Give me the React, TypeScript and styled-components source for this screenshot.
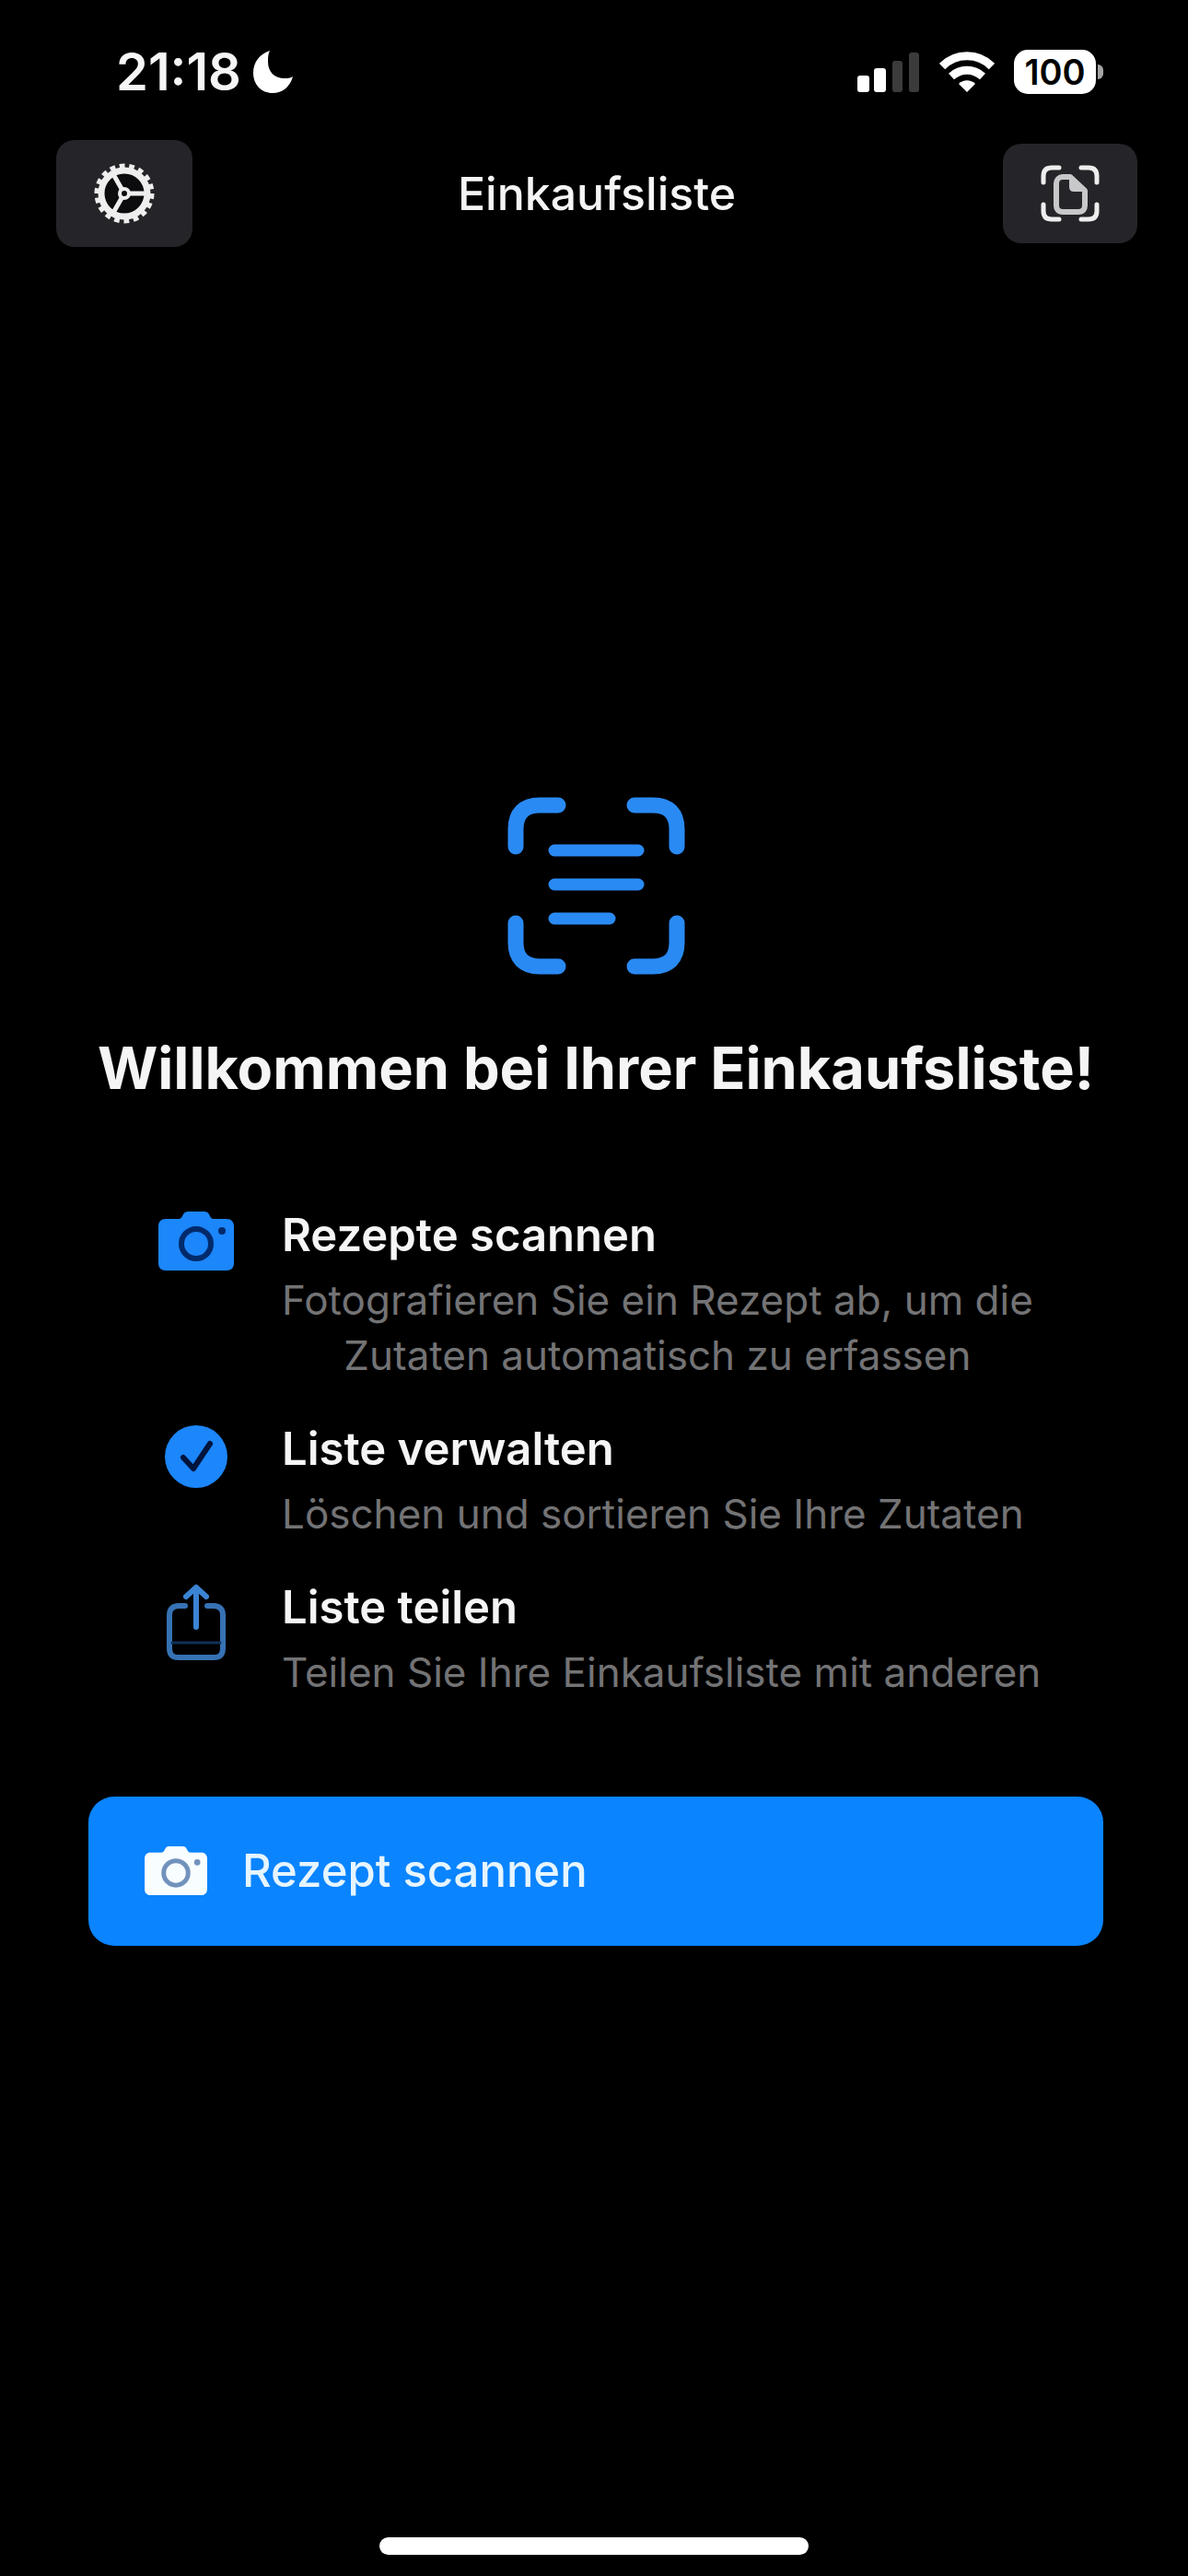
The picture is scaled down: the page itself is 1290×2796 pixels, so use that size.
import React from "react";
import styled, { createGlobalStyle } from "styled-components";

const BLUE = "#0a84ff";

const GlobalStyle = createGlobalStyle`
  *, *::before, *::after { box-sizing: border-box; }
  body {
    margin: 0;
    background: #000;
    color: #f5f5f5;
    font-family: Inter, "Liberation Sans", sans-serif;
  }
  h1, h2, h3, p, ul { margin: 0; padding: 0; }
  svg { display: block; flex: none; }
`;

const Screen = styled.div`
  min-height: 100vh;
  display: flex;
  flex-direction: column;
`;

const StatusBar = styled.div`
  display: flex;
  align-items: center;
  justify-content: space-between;
  padding: 48px 92px 40px 126px;
`;

const StatusGroup = styled.div<{ $gap: number }>`
  display: flex;
  align-items: center;
  gap: ${(p) => p.$gap}px;
  height: 60px;
`;

const Clock = styled.span`
  font-size: 56px;
  font-weight: 600;
  line-height: 60px;
`;

const Battery = styled.div`
  display: flex;
  align-items: center;
  gap: 2px;
`;

const BatteryBody = styled.span`
  width: 89px;
  height: 48px;
  border-radius: 15px;
  background: #fff;
  color: #000;
  font-size: 38px;
  font-weight: 600;
  line-height: 48px;
  text-align: center;
`;

const BatteryTip = styled.span`
  width: 6px;
  height: 16px;
  border-radius: 0 8px 8px 0;
  background: #a5a5a5;
`;

const NavBar = styled.header`
  display: grid;
  grid-template-columns: 1fr auto 1fr;
  align-items: center;
  height: 124px;
  padding: 0 55px 0 61px;
`;

const NavTitle = styled.h1`
  font-size: 50px;
  font-weight: 500;
  line-height: 60px;
`;

const NavButton = styled.button<{ $width: number; $height: number; $end?: boolean }>`
  display: flex;
  align-items: center;
  justify-content: center;
  justify-self: ${(p) => (p.$end ? "end" : "start")};
  width: ${(p) => p.$width}px;
  height: ${(p) => p.$height}px;
  padding: 0;
  border: 0;
  border-radius: 20px;
  background: #252529;
  color: #eee;
`;

const Main = styled.main`
  flex: 1;
  display: flex;
  flex-direction: column;
  justify-content: center;
  padding: 0 92px 0 96px;
`;

const Hero = styled.div`
  display: flex;
  flex-direction: column;
  align-items: center;
  gap: 61px;
`;

const Heading = styled.h2`
  font-size: 63px;
  font-weight: 700;
  line-height: 80px;
  text-align: center;
`;

const FeatureList = styled.ul`
  display: flex;
  flex-direction: column;
  gap: 40px;
  margin: 110px 72px 105px 76px;
  list-style: none;
`;

const Feature = styled.li`
  display: grid;
  grid-template-columns: 82px 1fr;
  column-gap: 52px;
`;

const FeatureIcon = styled.div`
  display: flex;
  justify-content: center;
  align-items: flex-start;
  padding-top: 6px;
`;

const FeatureText = styled.div`
  display: flex;
  flex-direction: column;
  align-items: flex-start;
  gap: 8px;
`;

const FeatureTitle = styled.h3`
  font-size: 49px;
  font-weight: 600;
  line-height: 64px;
`;

const FeatureDetail = styled.p`
  color: #737375;
  font-size: 44px;
  font-weight: 400;
  line-height: 60px;
  text-align: center;
  white-space: pre;
`;

const PrimaryButton = styled.button`
  display: flex;
  align-items: center;
  gap: 38px;
  width: 100%;
  height: 162px;
  padding: 0 61px;
  border: 0;
  border-radius: 28px;
  background: ${BLUE};
  color: #e6f5ff;
  font-family: inherit;
  font-size: 49px;
  font-weight: 500;
  line-height: 60px;
`;

const Footer = styled.footer`
  display: flex;
  justify-content: center;
  padding: 50px 0 23px;
`;

const HomeIndicator = styled.span`
  width: 466px;
  height: 19px;
  border-radius: 10px;
  background: #fff;
`;

const MoonIcon = () => (
  <svg width="46" height="48" viewBox="0 0 46 48" aria-hidden="true">
    <path d="M19 1C7 5 1 14 1 25c0 13 9 22 21 22 11 0 19-7 22-18-3 2-6 2-9 2-11 0-18-7-18-18 0-5 0-8 2-12z" fill="#fff" />
  </svg>
);

const SignalIcon = () => (
  <svg width="68" height="44" viewBox="0 0 68 44" aria-hidden="true">
    <rect x="0" y="26" width="13" height="18" rx="3" fill="#fff" />
    <rect x="18" y="18" width="13" height="26" rx="3" fill="#fff" />
    <rect x="38" y="10" width="11" height="34" rx="3" fill="#3b3b3b" />
    <rect x="56" y="1" width="11" height="43" rx="3" fill="#3b3b3b" />
  </svg>
);

const WifiIcon = () => (
  <svg width="60" height="46" viewBox="0 0 60 46" aria-hidden="true">
    <g fill="none" stroke="#fff" strokeWidth="9">
      <path d="M3 17C18 2 42 2 57 17" />
      <path d="M13 28c10-9 24-9 34 0" />
    </g>
    <path d="M30 45l-9-9c5-5 13-5 18 0z" fill="#fff" />
  </svg>
);

const GearIcon = () => (
  <svg width="66" height="66" viewBox="0 0 66 66" fill="none" stroke="currentColor" aria-hidden="true">
    <circle cx="33" cy="33" r="25" fill="#0c0c0e" strokeWidth="7" />
    <circle cx="33" cy="33" r="30" strokeWidth="5" pathLength="72" strokeDasharray="2.2 1.8" />
    <circle cx="33" cy="33" r="5" strokeWidth="4" />
    <path d="M38 33h18M30.500 28.700l-9-15.600M30.500 37.300l-9 15.600" strokeWidth="5" />
  </svg>
);

const DocumentScanIcon = () => (
  <svg width="64" height="62" viewBox="0 0 64 62" fill="none" stroke="currentColor" strokeLinecap="round" strokeLinejoin="round" aria-hidden="true">
    <path d="M3 19v-7c0-6 3-9 9-9h8M44 3h8c6 0 9 3 9 9v7M61 43v7c0 6-3 9-9 9h-8M20 59h-8c-6 0-9-3-9-9v-7" strokeWidth="5" />
    <path d="M24 13h8l16 15v16c0 4-2 7-7 7H24c-5 0-7-3-7-7V20c0-4 3-7 7-7z" stroke="#c8c8ca" strokeWidth="6" />
    <path d="M32 14v10c0 3 1 4 4 4h11z" fill="#c8c8ca" stroke="#c8c8ca" strokeWidth="2" />
  </svg>
);

const TextScanIcon = () => (
  <svg width="193" height="193" viewBox="0 0 193 193" fill="none" stroke="#2a8af3" strokeLinecap="round" aria-hidden="true">
    <path d="M9 54V35C9 18 18 9 35 9h20M138 9h20c17 0 26 9 26 26v19M184 137v21c0 17-9 26-26 26h-20M55 184H35c-17 0-26-9-26-26v-21" strokeWidth="17" />
    <path d="M51 58h91M51 95h91M51 132h60" strokeWidth="13" />
  </svg>
);

const CameraIcon = ({ width, color, cut }: { width: number; color: string; cut: string }) => (
  <svg width={width} height={Math.round((width * 64) / 82)} viewBox="0 0 82 64" aria-hidden="true">
    <path d="M8 8h14c2 0 3-1 4-3l1-2c1-2 3-3 5-3h18c2 0 4 1 5 3l1 2c1 2 2 3 4 3h14c5 0 8 3 8 8v40c0 5-3 8-8 8H8c-5 0-8-3-8-8V16c0-5 3-8 8-8z" fill={color} />
    <circle cx="41" cy="35" r="16" fill="none" stroke={cut} strokeWidth="6" />
    <circle cx="69" cy="21" r="4" fill={cut} />
  </svg>
);

const CheckIcon = () => (
  <svg width="68" height="68" viewBox="0 0 68 68" aria-hidden="true">
    <circle cx="34" cy="34" r="34" fill="#1c86fb" />
    <path d="M20 35l11 12 18-27" fill="none" stroke="#00143c" strokeWidth="6" strokeLinecap="round" strokeLinejoin="round" />
  </svg>
);

const ShareIcon = () => (
  <svg width="64" height="84" viewBox="0 0 64 84" fill="none" strokeLinecap="round" strokeLinejoin="round" aria-hidden="true">
    <path d="M20 24h-7c-7 0-10 4-10 10v36c0 7 3 10 10 10h38c7 0 10-3 10-10V34c0-6-3-10-10-10h-7" stroke="#3672b4" strokeWidth="6" />
    <path d="M6 64h52" stroke="#12305a" strokeWidth="3" />
    <path d="M32 47V5M21 14L32 4l11 10" stroke="#3b84d4" strokeWidth="6" />
  </svg>
);

const features = [
  {
    icon: <CameraIcon width={82} color="#1c86fb" cut="#002a6b" />,
    title: "Rezepte scannen",
    detail: "Fotografieren Sie ein Rezept ab, um die\nZutaten automatisch zu erfassen",
  },
  { icon: <CheckIcon />, title: "Liste verwalten", detail: "Löschen und sortieren Sie Ihre Zutaten" },
  { icon: <ShareIcon />, title: "Liste teilen", detail: "Teilen Sie Ihre Einkaufsliste mit anderen" },
];

export default function App() {
  return (
    <Screen>
      <GlobalStyle />
      <StatusBar>
        <StatusGroup $gap={12}>
          <Clock>21:18</Clock>
          <MoonIcon />
        </StatusGroup>
        <StatusGroup $gap={21}>
          <SignalIcon />
          <WifiIcon />
          <Battery>
            <BatteryBody>100</BatteryBody>
            <BatteryTip />
          </Battery>
        </StatusGroup>
      </StatusBar>
      <NavBar>
        <NavButton type="button" $width={148} $height={116} aria-label="Einstellungen">
          <GearIcon />
        </NavButton>
        <NavTitle>Einkaufsliste</NavTitle>
        <NavButton type="button" $width={146} $height={108} $end aria-label="Dokument scannen">
          <DocumentScanIcon />
        </NavButton>
      </NavBar>
      <Main>
        <Hero>
          <TextScanIcon />
          <Heading>Willkommen bei Ihrer Einkaufsliste!</Heading>
        </Hero>
        <FeatureList>
          {features.map((feature) => (
            <Feature key={feature.title}>
              <FeatureIcon>{feature.icon}</FeatureIcon>
              <FeatureText>
                <FeatureTitle>{feature.title}</FeatureTitle>
                <FeatureDetail>{feature.detail}</FeatureDetail>
              </FeatureText>
            </Feature>
          ))}
        </FeatureList>
        <PrimaryButton type="button">
          <CameraIcon width={68} color="#f8fdff" cut="#7292bd" />
          Rezept scannen
        </PrimaryButton>
      </Main>
      <Footer>
        <HomeIndicator />
      </Footer>
    </Screen>
  );
}
